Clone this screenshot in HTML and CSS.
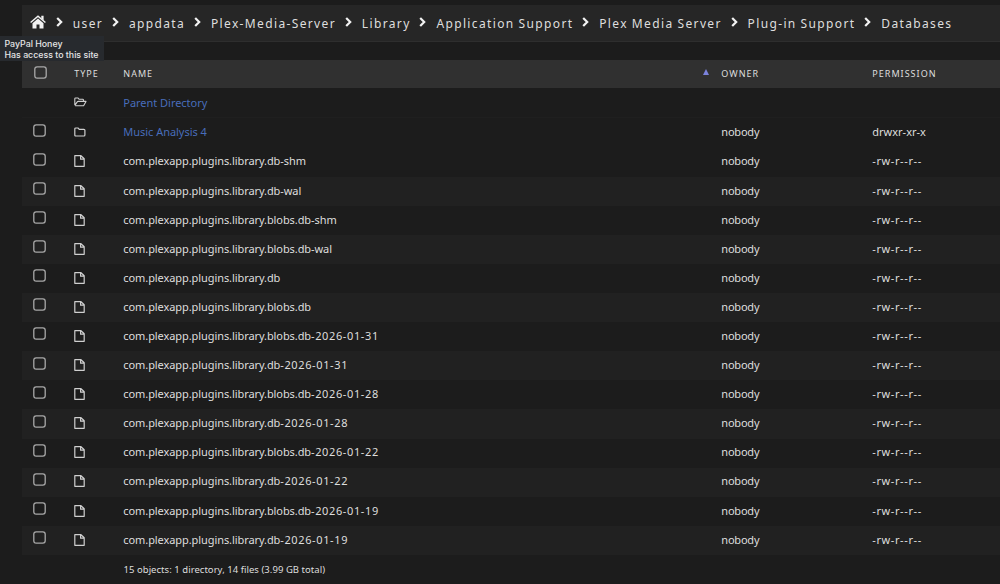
FILE: index.html
```
<!DOCTYPE html>
<html lang="en">
<head>
    <meta charset="UTF-8">
    <meta name="viewport" content="width=device-width, initial-scale=1.0">
    <title>Databases</title>
    <link rel="stylesheet" href="styles.css">
</head>
<body>
    <svg class="sprite" aria-hidden="true">
        <symbol id="chevron" viewBox="0 0 7 10">
            <path d="M1.2 1L5.2 5L1.2 9" fill="none" stroke="currentColor" stroke-width="2.2"/>
        </symbol>
        <symbol id="check" viewBox="0 0 13 13">
            <rect x=".8" y=".8" width="11.4" height="11.4" rx="2.4" fill="none" stroke="currentColor" stroke-width="1.3"/>
        </symbol>
        <symbol id="folder" viewBox="0 0 12 10">
            <path d="M.8 8V2Q.8 1 1.8 1H4.1L5.3 2.4H9.9Q10.9 2.4 10.9 3.3V8Q10.9 9 9.9 9H1.8Q.8 9 .8 8Z" fill="none" stroke="currentColor" stroke-width="1.2"/>
        </symbol>
        <symbol id="folder-open" viewBox="0 0 13 10">
            <path d="M.8 8.2V1.8Q.8 1 1.6 1H4.1L5.2 2.3H8.6Q9.5 2.3 9.5 3.2V4.4M.9 8.4L3.2 4.9Q3.5 4.4 4.1 4.4H12L9.9 8.2Q9.6 8.8 9 8.8H1.2" fill="none" stroke="currentColor" stroke-width="1.1" stroke-linejoin="round"/>
        </symbol>
        <symbol id="file" viewBox="0 0 11 12">
            <path d="M.8 .7H7L10.2 3.8V11.3H.8ZM6.6 .9V4.2H9.9" fill="none" stroke="currentColor" stroke-width="1.2" stroke-linejoin="round"/>
        </symbol>
    </svg>

    <nav class="breadcrumb">
        <svg class="home" viewBox="0 0 16 14">
            <path d="M8 3.5L13.5 8.2V13.4H9.5V9.6H6.5V13.4H2.5V8.2Z" fill="currentColor"/>
            <path d="M.6 7.5L8 1.2L15.4 7.5" fill="none" stroke="currentColor" stroke-width="1.5"/>
            <path d="M11.3 .8H13.6V5.3L11.3 3.4Z" fill="currentColor"/>
        </svg>
        <svg class="sep"><use href="#chevron"/></svg>
        <a>user</a>
        <svg class="sep"><use href="#chevron"/></svg>
        <a>appdata</a>
        <svg class="sep"><use href="#chevron"/></svg>
        <a>Plex-Media-Server</a>
        <svg class="sep"><use href="#chevron"/></svg>
        <a>Library</a>
        <svg class="sep"><use href="#chevron"/></svg>
        <a>Application Support</a>
        <svg class="sep"><use href="#chevron"/></svg>
        <a>Plex Media Server</a>
        <svg class="sep"><use href="#chevron"/></svg>
        <a>Plug-in Support</a>
        <svg class="sep"><use href="#chevron"/></svg>
        <a>Databases</a>
    </nav>

    <div class="tooltip">PayPal Honey<br>Has access to this site</div>

    <main class="listing">
        <div class="row head">
            <span><svg class="check"><use href="#check"/></svg></span>
            <span class="type-head">TYPE</span>
            <span class="name-head">NAME <i class="sort"></i></span>
            <span>OWNER</span>
            <span>PERMISSION</span>
        </div>
        <div class="row parent">
            <span></span>
            <span><svg class="icon-open"><use href="#folder-open"/></svg></span>
            <a class="link">Parent Directory</a>
        </div>
        <div id="files">
            <div class="row">
                <span><svg class="check"><use href="#check"/></svg></span>
                <span><svg class="icon-folder"><use href="#folder"/></svg></span>
                <a class="link">Music Analysis 4</a>
                <span class="owner">nobody</span>
                <span>drwxr-xr-x</span>
            </div>
        </div>
        <div class="summary">15 objects: 1 directory, 14 files (3.99 GB total)</div>
    </main>

    <script>
        const files = [
            ['library.db-shm'],
            ['library.db-wal'],
            ['library.blobs.db-shm'],
            ['library.blobs.db-wal'],
            ['library.db'],
            ['library.blobs.db'],
            ['library.blobs.db', '-2026-01-31'],
            ['library.db', '-2026-01-31'],
            ['library.blobs.db', '-2026-01-28'],
            ['library.db', '-2026-01-28'],
            ['library.blobs.db', '-2026-01-22'],
            ['library.db', '-2026-01-22'],
            ['library.blobs.db', '-2026-01-19'],
            ['library.db', '-2026-01-19']
        ];
        const list = document.getElementById('files');

        files.forEach(([file, date = '']) => {
            const row = document.createElement('div');
            row.className = 'row';
            row.innerHTML = `
                <span><svg class="check"><use href="#check"/></svg></span>
                <span><svg class="icon-file"><use href="#file"/></svg></span>
                <span class="name">com.plexapp.plugins.${file}<span class="date">${date}</span></span>
                <span class="owner">nobody</span>
                <span class="perm">-rw-r--r--</span>
            `;
            list.appendChild(row);
        });
    </script>
</body>
</html>
```
FILE: styles.css
```
* {
    box-sizing: border-box;
}
body {
    margin: 0;
    height: 584px;
    padding: 5px 0 0 21.5px;
    overflow: hidden;
    background-color: #1c1c1c;
    color: #dedede;
    font-family: "Noto Sans", "Open Sans", sans-serif;
    font-size: 11px;
}
svg {
    display: block;
}
.sprite {
    position: absolute;
    width: 0;
    height: 0;
}
.breadcrumb {
    display: flex;
    align-items: center;
    height: 37px;
    padding-left: 8px;
    background-color: #262626;
    border-bottom: 1px solid #2e2e2e;
    font-size: 12px;
    letter-spacing: 1.36px;
    word-spacing: -0.5px;
    white-space: nowrap;
}
.breadcrumb a {
    padding-top: 2px;
    line-height: 18px;
}
.home {
    width: 16px;
    height: 14px;
    margin: 0 1.5px 2px 0;
    color: #f2f2f2;
}
.sep {
    flex: none;
    width: 7px;
    height: 10px;
    margin: 0 10px 3px 8.8px;
    color: #f2f2f2;
}
.tooltip {
    position: absolute;
    left: 0;
    top: 36px;
    width: 104px;
    height: 25px;
    padding: 1.5px 0 0 4.5px;
    background-color: #272a2e;
    color: #e6e6e6;
    font: 500 8.8px/11px Inter, sans-serif;
    white-space: nowrap;
}
.listing {
    margin-top: 17.5px;
}
.row {
    display: grid;
    grid-template-columns: 52px 49.8px 598px 151px 1fr;
    align-items: center;
    height: 29.1px;
    padding-bottom: 2.4px;
    white-space: nowrap;
}
#files .row:nth-child(odd) {
    background-color: #212121;
}
#files .row:first-child {
    background-color: #1c1c1c;
}
.row.head {
    height: 28.8px;
    padding-bottom: 0;
    background-color: #303030;
    font-size: 9px;
    letter-spacing: 1.02px;
}
.row.parent {
    height: 30.2px;
    padding-bottom: 1px;
    border-bottom: 1px solid #1f1f1f;
}
.check {
    width: 13px;
    height: 13px;
    margin: 0 0 3px 11.5px;
    color: #a8a8a8;
}
.head .check {
    margin: 0 0 2px 12px;
}
.type-head {
    padding-left: 0.7px;
}
.name-head {
    display: flex;
    justify-content: space-between;
}
.sort {
    width: 0;
    height: 0;
    margin: 2px 12px 0 0;
    border: 3.5px solid transparent;
    border-top: 0;
    border-bottom: 6px solid #7b82dc;
}
.link {
    color: #486dba;
    letter-spacing: -0.03px;
}
.name {
    letter-spacing: -0.08px;
}
.date {
    letter-spacing: 0.62px;
}
.owner {
    letter-spacing: -0.2px;
}
.perm {
    letter-spacing: 0.6px;
}
.icon-open,
.icon-folder,
.icon-file {
    color: #cfcfcf;
}
.icon-open {
    width: 13px;
    height: 10px;
}
.icon-folder {
    width: 12px;
    height: 10px;
}
.icon-file {
    width: 11px;
    height: 12px;
    margin-top: 1px;
}
.summary {
    padding: 7px 0 0 102px;
    font-size: 9.5px;
    letter-spacing: 0.04px;
    line-height: 15px;
}
```
